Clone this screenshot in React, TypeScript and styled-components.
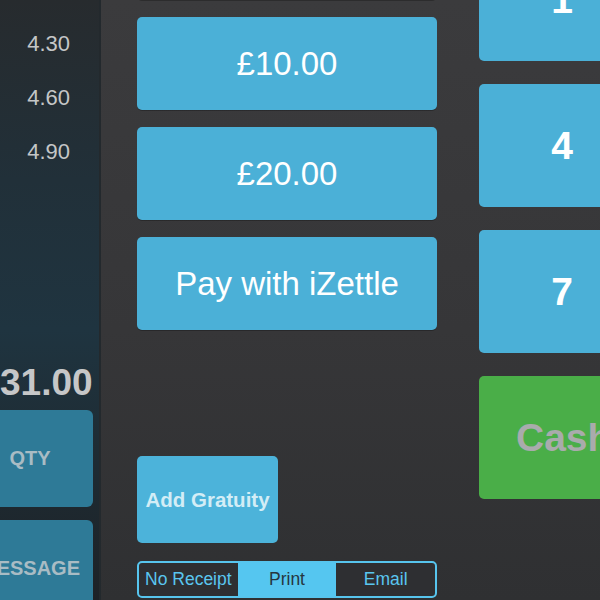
import React from "react";
import styled, { createGlobalStyle } from "styled-components";

const Global = createGlobalStyle`
  html, body { margin: 0; padding: 0; }
  body { width: 600px; height: 600px; overflow: hidden; background: #343436; font-family: "Liberation Sans", Arial, sans-serif; }
`;

const Screen = styled.div`
  width: 600px;
  height: 600px;
  display: flex;
  overflow: hidden;
  background: linear-gradient(180deg, #3b3b3d 0%, #363638 55%, #2f3032 100%);
`;

const Sidebar = styled.div`
  width: 101px;
  flex: none;
  display: flex;
  flex-direction: column;
  overflow: hidden;
  background: linear-gradient(180deg, #272b2e 0%, #213039 30%, #1f3440 55%, #1e2a31 80%, #1d2227 100%);
  border-right: 2px solid #23292d;
  box-sizing: border-box;
`;

const PriceList = styled.div`
  display: flex;
  flex-direction: column;
  gap: 30px;
  padding: 32px 29px 0 0;
`;

const Price = styled.div`
  text-align: right;
  font-size: 22px;
  line-height: 24px;
  color: #c4c6c7;
`;

const Total = styled.div`
  margin-top: 200px;
  text-align: right;
  padding-right: 7px;
  font-size: 37px;
  line-height: 38px;
  font-weight: bold;
  color: #c6c7c8;
  white-space: nowrap;
`;

const SideButtons = styled.div`
  margin-top: 8px;
  margin-left: -33px;
  display: flex;
  flex-direction: column;
  gap: 13px;
`;

const SideButton = styled.div`
  width: 126px;
  height: 97px;
  flex: none;
  border-radius: 6px;
  background: #2e7a97;
  display: flex;
  align-items: center;
  justify-content: center;
  font-size: 20px;
  font-weight: bold;
  color: #a9bcc4;
  white-space: nowrap;
`;

const Middle = styled.div`
  width: 300px;
  flex: none;
  margin-left: 36px;
  display: flex;
  flex-direction: column;
  margin-top: -93px;
`;

const PayStack = styled.div`
  display: flex;
  flex-direction: column;
  gap: 17px;
`;

const PayButton = styled.div`
  height: 93px;
  border-radius: 5px;
  background: #4bb0d7;
  display: flex;
  align-items: center;
  justify-content: center;
  color: #ffffff;
  font-size: 33px;
  box-shadow: 0 1px 0 rgba(0,0,0,0.25);
`;

const Gratuity = styled.div`
  margin-top: 126px;
  width: 141px;
  height: 87px;
  border-radius: 5px;
  background: #4cb3da;
  display: flex;
  align-items: center;
  justify-content: center;
  color: #d3edf6;
  font-size: 20.5px;
  font-weight: bold;
`;

const Segmented = styled.div`
  margin-top: 18px;
  height: 37px;
  box-sizing: border-box;
  border: 2px solid #57c5ee;
  border-radius: 5px;
  display: grid;
  grid-template-columns: 1fr 1fr 1fr;
  overflow: hidden;
  background: #2e2f32;
`;

const Segment = styled.div<{ $active?: boolean }>`
  display: flex;
  align-items: center;
  justify-content: center;
  font-size: 17.5px;
  background: ${(p) => (p.$active ? "#55c6f0" : "transparent")};
  color: ${(p) => (p.$active ? "#263640" : "#5ac6ef")};
  white-space: nowrap;
`;

const Keypad = styled.div`
  width: 166px;
  flex: none;
  margin-left: 42px;
  margin-top: -62px;
  display: flex;
  flex-direction: column;
  gap: 23px;
`;

const Key = styled.div<{ $green?: boolean }>`
  height: 123px;
  flex: none;
  border-radius: 5px;
  background: ${(p) => (p.$green ? "#4aae48" : "#4bb0d7")};
  display: flex;
  align-items: center;
  justify-content: ${(p) => (p.$green ? "flex-start" : "center")};
  color: ${(p) => (p.$green ? "#a9abac" : "#ffffff")};
  font-size: 39px;
  font-weight: bold;
  padding-left: ${(p) => (p.$green ? "37px" : "0")};
`;

export default function App() {
  return (
    <>
      <Global />
      <Screen>
        <Sidebar>
          <PriceList>
            <Price>4.30</Price>
            <Price>4.60</Price>
            <Price>4.90</Price>
          </PriceList>
          <Total>31.00</Total>
          <SideButtons>
            <SideButton>QTY</SideButton>
            <SideButton>MESSAGE</SideButton>
          </SideButtons>
        </Sidebar>
        <Middle>
          <PayStack>
            <PayButton>£5.00</PayButton>
            <PayButton>£10.00</PayButton>
            <PayButton>£20.00</PayButton>
            <PayButton>Pay with iZettle</PayButton>
          </PayStack>
          <Gratuity>Add Gratuity</Gratuity>
          <Segmented>
            <Segment>No Receipt</Segment>
            <Segment $active>Print</Segment>
            <Segment>Email</Segment>
          </Segmented>
        </Middle>
        <Keypad>
          <Key>1</Key>
          <Key>4</Key>
          <Key>7</Key>
          <Key $green>Cash</Key>
        </Keypad>
      </Screen>
    </>
  );
}
